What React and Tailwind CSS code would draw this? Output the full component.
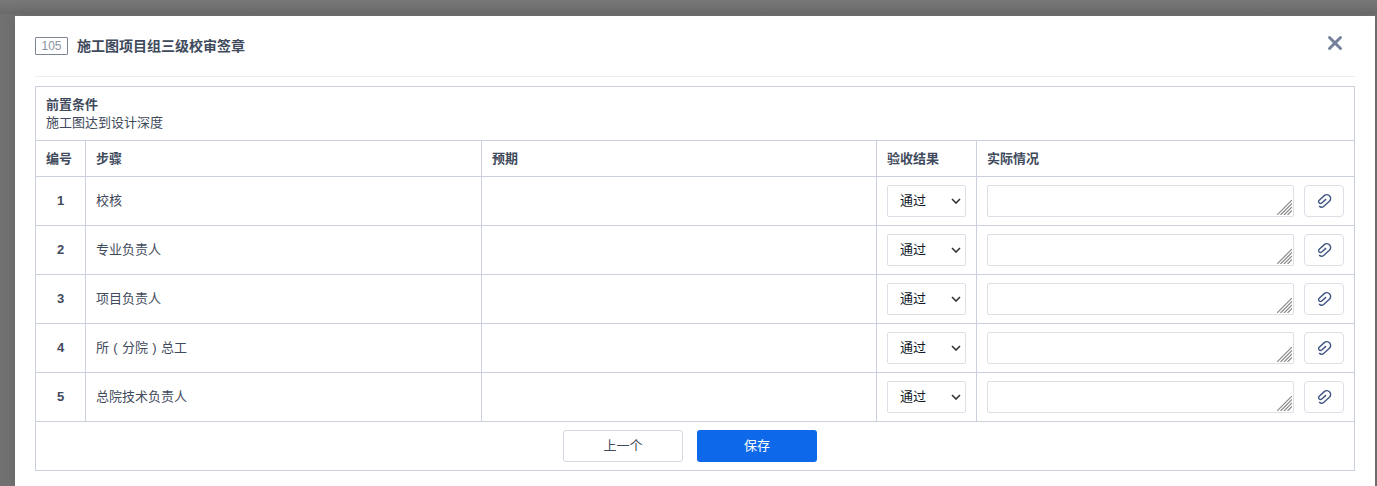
import { X } from 'lucide-react'

const steps = [
  '校核',
  '专业负责人',
  '项目负责人',
  <>所<span className="inline-block w-[13px] text-center">(</span>分院<span className="inline-block w-[13px] text-center">)</span>总工</>,
  '总院技术负责人',
]

const Clip = () => (
  <svg width="18" height="18" viewBox="0 0 18 18" fill="none" stroke="#3f5580" strokeWidth="1.4">
    <g transform="rotate(48 9 9)">
      <path d="M9 6.2V12a1.9 1.9 0 0 1-3.8 0V5.2a3.8 3.8 0 0 1 7.6 0V12.5a3.4 3.4 0 0 1-3.4 3.4" />
    </g>
  </svg>
)

const Row = ({ no, name }) => (
  <tr className="h-[49px]">
    <td className="border border-[#cbd0de] text-center font-bold text-[13px] text-[#3f4a5c]">{no}</td>
    <td className="border border-[#cbd0de] px-[10px] text-[13px] text-[#3f4a5c]">{name}</td>
    <td className="border border-[#cbd0de]"></td>
    <td className="border border-[#cbd0de] px-[10px]">
      <div className="h-[32px] w-[79px] border border-[#dcdfe6] rounded-[2px] flex items-center justify-between pl-3 pr-[3px] text-[13px] text-[#111827]">
        <span>通过</span>
        <svg width="10" height="6" viewBox="0 0 10 6" className="mr-[1px]" fill="none" stroke="#333" strokeWidth="1.6">
          <path d="M1 1l4 4 4-4" />
        </svg>
      </div>
    </td>
    <td className="border border-[#cbd0de] px-[10px]">
      <div className="flex gap-[10px]">
        <div className="relative h-[32px] flex-1 border border-[#dcdfe6] rounded-[2px] overflow-hidden">
          {/* textarea resize grip */}
          <svg width="15" height="15" viewBox="0 0 15 15" className="absolute right-px bottom-px" stroke="#8a8a8a" strokeWidth="1.2">
            <path d="M0 15L15 0M3.5 15L15 3.5M7 15L15 7M10.5 15L15 10.5" />
          </svg>
        </div>
        <button className="h-[32px] w-[40px] border border-[#dcdfe6] rounded-[4px] flex items-center justify-center">
          <Clip />
        </button>
      </div>
    </td>
  </tr>
)

const App = () => {
  return (
    <div className="h-[486px] w-[1377px] overflow-hidden bg-[linear-gradient(180deg,#787878_0px,#6b6b6b_14px,#717171_14px)] pt-4 pl-[15px] font-['Liberation_Sans','Noto_Sans_CJK_SC',sans-serif]">
      <div className="w-[1360px] h-[470px] bg-white px-5 shadow-[0_0_12px_rgba(0,0,0,0.12)]">
        {/* Title */}
        <div className="h-[61px] border-b border-[#eceef2] flex items-start justify-between">
          <div className="flex items-center gap-[9px] pt-[21px]">
            <span className="h-[18px] w-[33px] border border-[#7d8593] rounded-[1px] text-xs text-[#8b93a1] flex items-center justify-center">105</span>
            <span className="text-sm leading-[18px] font-bold text-[#3f4a5c]">施工图项目组三级校审签章</span>
          </div>
          <X size={22} color="#75809a" strokeWidth={3.2} className="mt-4 mr-[9px]" />
        </div>

        <table className="mt-[9px] w-[1320px] table-fixed border-collapse border border-[#cbd0de]">
          <colgroup>
            <col className="w-[50px]" />
            <col className="w-[396px]" />
            <col className="w-[395px]" />
            <col className="w-[100px]" />
            <col />
          </colgroup>
          <tbody>
            <tr className="h-[54px]">
              <td colSpan={5} className="border border-[#cbd0de] px-[10px] text-[13px] leading-[18px] text-[#3f4a5c]">
                <div className="font-bold">前置条件</div>
                <div>施工图达到设计深度</div>
              </td>
            </tr>
            <tr className="h-[36px] text-[13px] font-bold text-[#3f4a5c]">
              <td className="border border-[#cbd0de] px-[10px]">编号</td>
              <td className="border border-[#cbd0de] px-[10px]">步骤</td>
              <td className="border border-[#cbd0de] px-[10px]">预期</td>
              <td className="border border-[#cbd0de] px-[10px]">验收结果</td>
              <td className="border border-[#cbd0de] px-[10px]">实际情况</td>
            </tr>
            {steps.map((name, i) => (
              <Row key={i} no={i + 1} name={name} />
            ))}
            <tr className="h-[49px]">
              <td colSpan={5} className="border border-[#cbd0de]">
                <div className="flex justify-center gap-[14px] pr-[10px]">
                  <button className="h-[32px] w-[120px] border border-[#d5d9e3] rounded-[3px] text-[13px] text-[#3f4a5c] bg-white">上一个</button>
                  <button className="h-[32px] w-[120px] rounded-[3px] text-[13px] text-white bg-[#0d68ea]">保存</button>
                </div>
              </td>
            </tr>
          </tbody>
        </table>
      </div>
    </div>
  )
}

export default App
